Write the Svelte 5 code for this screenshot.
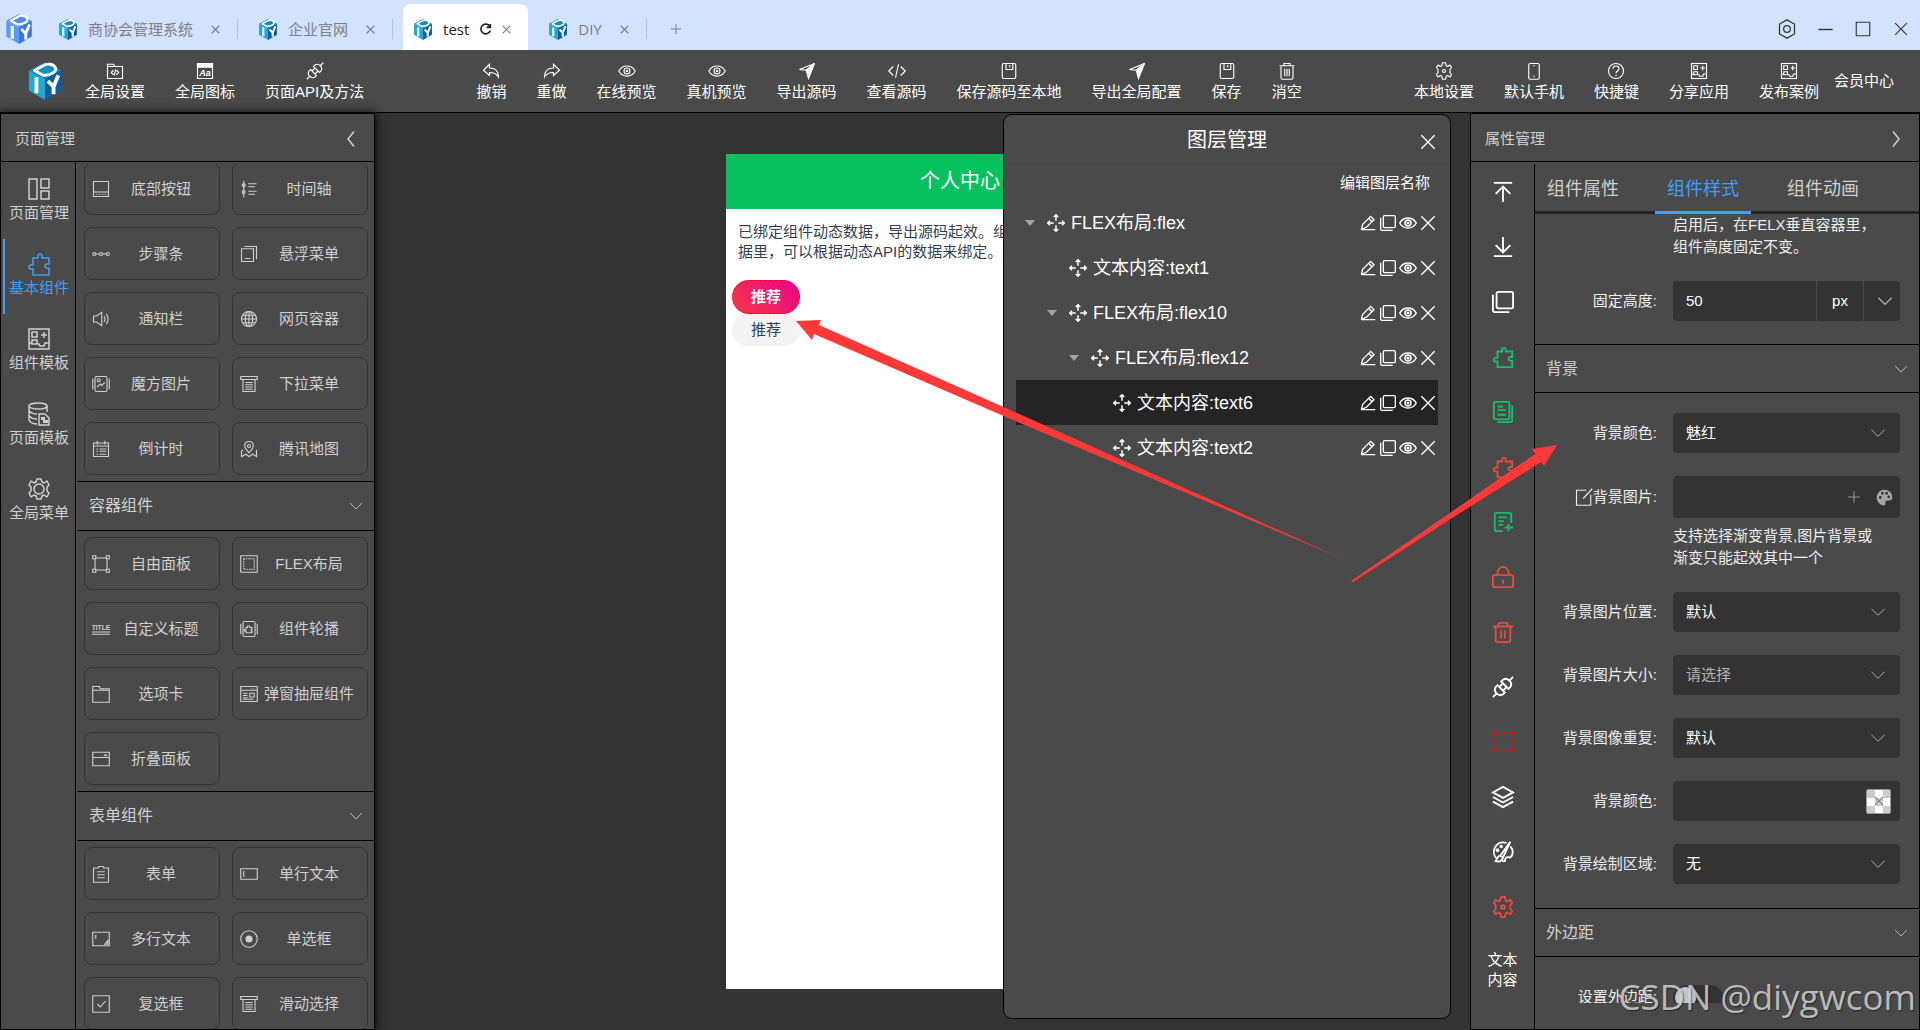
<script lang="ts">
    // Inner markup of every icon, drawn on a 24x24 grid
    const icons: Record<string, string> = {
        codeBox: '<path d="M2 3h8l2 3h10v16H2zM2 6h10M10 11l-3 3 3 3M14 11l3 3-3 3M13 10l-2 8"/>',
        fontBox: '<path d="M2 2h20v20H2z"/><path d="M2 2h20v5H2z" fill="currentColor"/><text x="12" y="19" font-size="12" font-weight="bold" font-style="italic" text-anchor="middle" fill="currentColor" stroke="none">Aa</text>',
        plug: '<path d="M23 1l-4 4M1 23l4-4M6 10l8 8-2 2c-3 2-5 1-7-1s-3-4-1-7zM10 6l8 8 2-2c2-3 1-5-1-7s-4-3-7-1zM8 12l4-4M12 16l4-4"/>',
        undo: '<path d="M10 3L2 11l8 7v-4c5 0 9 1 12 6 0-7-4-12-12-12z"/>',
        redo: '<path d="M14 3l8 8-8 7v-4c-5 0-9 1-12 6 0-7 4-12 12-12z"/>',
        eye: '<path d="M1 12c5-9 17-9 22 0-5 9-17 9-22 0z"/><circle cx="12" cy="12" r="4"/><circle cx="12" cy="12" r="1"/>',
        send: '<path d="M22 2L2 10l9 1z"/><path d="M22 2l-8 20-3-11z" fill="currentColor"/>',
        code: '<path d="M7 6l-6 6 6 6M17 6l6 6-6 6M14 3l-4 18"/>',
        save: '<rect x="3" y="2" width="18" height="20" rx="2"/><path d="M8 2v8h9V2M13 4v3"/>',
        trash: '<path d="M2 5h20M8 5V2h8v3M4 6v15q0 2 2 2h12q2 0 2-2V6M9 9v10M12 9v10M15 9v10"/>',
        bin: '<path d="M1 6h22M7 6V3q0-1 1-1h8q1 0 1 1v3M4 6v15q0 2 2 2h12q2 0 2-2V6M10 10v9M14 10v9"/>',
        cog: '<path d="M10 1h4l1 4 2 1 3-2 2 3-2 3v4l2 3-2 3-3-2-2 1-1 4h-4l-1-4-2-1-3 2-2-3 2-3v-4L2 7l2-3 3 2 2-1z" stroke-linejoin="round"/><circle cx="12" cy="12" r="2"/>',
        gear: '<path d="M10 2h4l1 3 2 1 3-2 2 4-2 2v4l2 2-2 4-3-2-2 1-1 3h-4l-1-3-2-1-3 2-2-4 2-2v-4L2 8l2-4 3 2 2-1z" stroke-linejoin="round"/><circle cx="12" cy="12" r="5"/>',
        phone: '<rect x="5" y="2" width="14" height="21" rx="2"/><path d="M11 5h2M11 19h2"/>',
        help: '<circle cx="12" cy="12" r="10"/><path d="M8 9c0-5 8-5 8 0 0 3-4 3-4 6M12 17v2"/>',
        template: '<rect x="2" y="2" width="20" height="20"/><path d="M5 5h5v5H5zM5 13h5v4H5zM17 5v6M14 8h6M2 16h3M10 17h2l1 2h4l1-3h4"/>',
        layout: '<path d="M2 2h8v20H2zM14 2h8v9h-8zM14 14h8v8h-8z"/>',
        puzzle: '<path d="M6 6h5V4a2 2 0 0 1 4 0v2h7v6h-2a2 2 0 0 0 0 4h2v7H6v-6H4a2 2 0 1 1 0-4h2z"/>',
        database: '<ellipse cx="11" cy="4" rx="9" ry="3"/><path d="M2 4v14q2 4 8 4M20 4v6M2 9q3 3 8 3M2 14q3 3 8 3M12 12h6l4 4v7H12z"/><path d="M14 15h4v3h3v3h-5v-3h-2z" fill="currentColor" stroke="none"/>',
        tabbar: '<path d="M2 2h20v20H2zM2 16h20"/><path d="M5 19h2M9 19h2M13 19h2M17 19h2"/>',
        timeline: '<path d="M5 1v22M11 5h11M11 9h9M11 15h11M11 19h9"/><circle cx="5" cy="7" r="2"/><circle cx="5" cy="16" r="2"/>',
        steps: '<circle cx="3" cy="12" r="2"/><circle cx="12" cy="12" r="2"/><circle cx="21" cy="12" r="2"/><path d="M5 12h5M14 12h5"/>',
        float: '<path d="M2 5h16v17H2zM6 2h16v17M6 18h8"/>',
        sound: '<path d="M2 8h4l7-5v18l-7-5H2zM16 8q3 4 0 8M19 5q5 7 0 14"/>',
        globe: '<circle cx="12" cy="12" r="10"/><ellipse cx="12" cy="12" rx="5" ry="10"/><path d="M2 12h20M12 2v20M4 7h16M4 17h16"/>',
        picture: '<rect x="4" y="2" width="16" height="20" rx="2"/><path d="M1 5v14M23 5v14M7 16l4-4 2 2 4-4"/><circle cx="9" cy="7" r="2"/>',
        dropdown: '<path d="M1 2h22v4H1zM4 6v16h16V6M7 10h10M7 13h10M7 16h10M7 19h10"/>',
        calendar: '<path d="M2 4h20v18H2zM2 8h20M7 1v5M17 1v5M6 12h2M10 12h9M6 15h2M10 15h9M6 19h2M10 19h9"/>',
        map: '<path d="M12 17c-9-9-6-15 0-15s9 6 0 15z"/><circle cx="12" cy="8" r="2"/><path d="M4 13l-2 2v7l6-3 4 3 5-3 5 3v-9"/>',
        free: '<path d="M4 5v14M20 5v14M5 4h14M5 20h14"/><path d="M1 1h4v4H1zM19 1h4v4h-4zM1 19h4v4H1zM19 19h4v4h-4z"/>',
        flexBox: '<path d="M1 1h22v22H1z"/><path d="M5 5h14v14H5z" stroke-dasharray="2 1"/>',
        title: '<text x="12" y="13" font-size="9" font-weight="bold" text-anchor="middle" fill="currentColor" stroke="none">TITLE</text><path d="M0 16h24M0 19h24"/>',
        carousel: '<rect x="4" y="2" width="16" height="20" rx="2"/><path d="M1 5v14M23 5v14M8 10h2V8h3v2h3v3h-1v2h1v2H8v-2H6v-2h2z"/>',
        tabs: '<path d="M1 2h9l1 3h12v18H1zM1 7h22M15 5v2"/>',
        drawer: '<path d="M1 2h22v20H1zM1 7h22M15 5h1M18 5h1M4 11h6M4 14h6M4 17h6M4 19h14M13 11h6v5h-6z"/>',
        collapse: '<path d="M1 3h22v18H1zM1 10h22M16 8l2-2 2 2"/>',
        form: '<path d="M2 4h6l1-2h6l1 2h6v19H2zM7 9h10M7 13h10M7 17h10"/>',
        input: '<path d="M1 5h22v14H1zM5 8v8"/>',
        textarea: '<path d="M1 3h22v18H1zM5 6v6M17 19l4-5v5z"/>',
        radio: '<circle cx="12" cy="12" r="11"/><circle cx="12" cy="12" r="4" fill="currentColor"/>',
        check: '<path d="M1 1h22v22H1zM7 12l4 4 7-8"/>',
        left: '<path d="M16 2L8 12l8 10"/>',
        right: '<path d="M8 2l8 10-8 10"/>',
        down: '<path d="M2 7l10 10L22 7"/>',
        close: '<path d="M2 2l20 20M22 2L2 22"/>',
        plus: '<path d="M12 2v20M2 12h20"/>',
        reload: '<path d="M20 6a9 9 0 1 0 1 8M21 2v6h-7"/>',
        hexagon: '<path d="M12 1l9 5v12l-9 5-9-5V6z"/><circle cx="12" cy="12" r="4"/>',
        minus: '<path d="M2 12h20"/>',
        square: '<path d="M3 3h18v18H3z"/>',
        move: '<path d="M12 1v8M12 15v8M1 12h8M15 12h8M9 4l3-3 3 3M9 20l3 3 3-3M4 9l-3 3 3 3M20 9l3 3-3 3"/>',
        pencil: '<path d="M2 22l2-8L16 2l5 5L10 18l-8 4h21M13 5l5 5"/>',
        copy: '<rect x="5" y="1" width="18" height="18" rx="2"/><path d="M1 4v17q0 2 2 2h16"/>',
        top: '<path d="M2 2h20M12 23V6M4 14l8-8 8 8"/>',
        bottom: '<path d="M2 22h20M12 1v17M4 10l8 8 8-8"/>',
        docs: '<rect x="2" y="1" width="17" height="19" rx="2"/><path d="M22 5v16q0 2-2 2H6M6 6h6M6 10h9M6 15h9"/>',
        docPlus: '<path d="M12 22H5q-2 0-2-2V4q0-2 2-2h14q2 0 2 2v9M7 7h9M7 11h6M7 15h5M18 14v8M14 18h9"/>',
        lock: '<rect x="1" y="10" width="22" height="13" rx="2"/><path d="M6 10V7a6 6 0 0 1 12 0v3M12 15v4"/>',
        dashed: '<path d="M2 6V2h4M10 2h4M18 2h4v4M22 10v4M22 18v4h-4M14 22h-4M6 22H2v-4M2 14v-4"/>',
        layers: '<path d="M12 1l11 6-11 6L1 7zM1 12l11 6 11-6M1 17l11 6 11-6"/>',
        brush: '<path d="M16 2C4-1-2 12 5 19M20 6c4 4 3 9 0 12-4-1-6 0-6 4h-3M20 1L9 16l3 2zM9 16c-3 0-3 3-5 6 4 1 7 0 8-4"/><circle cx="6" cy="10" r="1"/><circle cx="10" cy="6" r="1"/>',
        editBox: '<path d="M15 3H2v20h19V9M23 1L11 14"/>',
        palette: '<path d="M12 1C6 1 1 6 1 12s5 11 10 11c4 0 1-4 3-6s9 1 9-5c0-7-5-11-11-11zM6 14a2 2 0 1 1 0-4 2 2 0 0 1 0 4zM9 8a2 2 0 1 1 0-4 2 2 0 0 1 0 4zM15 8a2 2 0 1 1 0-4 2 2 0 0 1 0 4zM18 13a2 2 0 1 1 0-4 2 2 0 0 1 0 4z" fill="currentColor" stroke="none"/>',
    };

    let activeTab = $state('test');
    const tabs = ['商协会管理系统', '企业官网', 'test', 'DIY'];

    const leftTools = [['codeBox', '全局设置'], ['fontBox', '全局图标'], ['plug', '页面API及方法']];
    const midTools = [
        ['undo', '撤销'], ['redo', '重做'], ['eye', '在线预览'], ['eye', '真机预览'], ['send', '导出源码'],
        ['code', '查看源码'], ['save', '保存源码至本地'], ['send', '导出全局配置'], ['save', '保存'], ['trash', '消空'],
    ];
    const rightTools = [['cog', '本地设置'], ['phone', '默认手机'], ['help', '快捷键'], ['template', '分享应用'], ['template', '发布案例']];

    let activeNav = $state('基本组件');
    const navItems = [['layout', '页面管理'], ['puzzle', '基本组件'], ['template', '组件模板'], ['database', '页面模板'], ['gear', '全局菜单']];

    const baseWidgets = [
        ['tabbar', '底部按钮'], ['timeline', '时间轴'], ['steps', '步骤条'], ['float', '悬浮菜单'], ['sound', '通知栏'],
        ['globe', '网页容器'], ['picture', '魔方图片'], ['dropdown', '下拉菜单'], ['calendar', '倒计时'], ['map', '腾讯地图'],
    ];
    const boxWidgets = [
        ['free', '自由面板'], ['flexBox', 'FLEX布局'], ['title', '自定义标题'], ['carousel', '组件轮播'],
        ['tabs', '选项卡'], ['drawer', '弹窗抽屉组件'], ['collapse', '折叠面板'],
    ];
    const formWidgets = [
        ['form', '表单'], ['input', '单行文本'], ['textarea', '多行文本'],
        ['radio', '单选框'], ['check', '复选框'], ['dropdown', '滑动选择'],
    ];

    // Layer tree, flattened with its depth
    let selectedLayer = $state('文本内容:text6');
    const layers = [
        { name: 'FLEX布局:flex', depth: 0, open: true },
        { name: '文本内容:text1', depth: 1, open: false },
        { name: 'FLEX布局:flex10', depth: 1, open: true },
        { name: 'FLEX布局:flex12', depth: 2, open: true },
        { name: '文本内容:text6', depth: 3, open: false },
        { name: '文本内容:text2', depth: 3, open: false },
    ];

    const sideTools = [
        ['top', 'white'], ['bottom', 'white'], ['copy', 'white'], ['puzzle', 'green'], ['docs', 'green'], ['puzzle', 'red'], ['docPlus', 'green'],
        ['lock', 'red'], ['bin', 'red'], ['plug', 'white'], ['dashed', 'bright'], ['layers', 'white'], ['brush', 'white'], ['cog', 'red'],
    ];

    let activeProp = $state('组件样式');
    const propTabs = ['组件属性', '组件样式', '组件动画'];

    let fixedHeight = $state('50');
    let marginOn = $state(false);
</script>

{#snippet icon(name: string, size = 18, weight = 1.5)}
    <svg class="icon" width={size} height={size} viewBox="0 0 24 24" fill="none" stroke="currentColor" stroke-width={weight} aria-hidden="true">
        {@html icons[name]}
    </svg>
{/snippet}

{#snippet cube(width: number, height: number, light: boolean)}
    <svg class="icon" {width} {height} viewBox="0 0 36 40" aria-hidden="true">
        <path d="M18 0l17 9-17 9L1 9z" fill={light ? '#4d8df2' : '#0f8fc0'} />
        <path d="M1 9l17 9v22L1 30z" fill={light ? '#5a9cf8' : '#1fa9d6'} />
        <path d="M35 9l-17 9v22l17-10z" fill={light ? '#3a76e0' : '#0b5c9c'} />
        <path d="M7 9l9-5c5-3 11-2 13 2s-5 8-13 8z" fill="none" stroke="#fff" stroke-width="3" stroke-linejoin="round" />
        <path d="M9 16v17M21 20l6 6M32 14l-5 12v8" fill="none" stroke="#fff" stroke-width="4" />
    </svg>
{/snippet}

{#snippet tool(name: string, label: string)}
    <button class="tool">
        <span class="tool-icon">{@render icon(name)}</span>
        <span>{label}</span>
    </button>
{/snippet}

{#snippet widgets(list: string[][])}
    <div class="widgets">
        {#each list as [name, label]}
            <button class="widget">
                {@render icon(name)}
                <span>{label}</span>
            </button>
        {/each}
    </div>
{/snippet}

{#snippet sectionHead(label: string)}
    <button class="section-head">
        <span>{label}</span>
        {@render icon('down', 14)}
    </button>
{/snippet}

{#snippet selectRow(id: string, label: string, value: string, placeholder = false)}
    <div class="row">
        <label for={id}>{label}:</label>
        <div class="select">
            <select {id} class:placeholder>
                <option>{value}</option>
            </select>
            {@render icon('down', 16)}
        </div>
    </div>
{/snippet}

<div class="app">
    <header class="tabbar">
        <span class="brand">{@render cube(28, 30, true)}</span>
        {#each tabs as tab}
            <div class="tab" class:active={tab === activeTab}>
                <button class="tab-name" onclick={() => (activeTab = tab)}>
                    {@render cube(20, 21, false)}
                    <span>{tab}</span>
                    {#if tab === activeTab}
                        {@render icon('reload', 13, 3)}
                    {/if}
                </button>
                <button class="tab-close" aria-label="关闭">{@render icon('close', 9, 3)}</button>
            </div>
        {/each}
        <button class="win" aria-label="新建">{@render icon('plus', 12, 2)}</button>
        <div class="win-controls">
            <button class="win" aria-label="设置">{@render icon('hexagon', 20)}</button>
            <button class="win" aria-label="最小化">{@render icon('minus', 17, 2)}</button>
            <button class="win" aria-label="最大化">{@render icon('square', 18)}</button>
            <button class="win" aria-label="关闭">{@render icon('close', 14, 2)}</button>
        </div>
    </header>

    <nav class="toolbar">
        <div class="tool-group">
            <span class="logo">{@render cube(36, 38, false)}</span>
            {#each leftTools as [name, label]}
                {@render tool(name, label)}
            {/each}
        </div>
        <div class="tool-group">
            {#each midTools as [name, label]}
                {@render tool(name, label)}
            {/each}
        </div>
        <div class="tool-group">
            {#each rightTools as [name, label]}
                {@render tool(name, label)}
            {/each}
            <button class="member">会员中心</button>
        </div>
    </nav>

    <main>
        <aside class="panel left-panel">
            <div class="panel-head">
                <span>页面管理</span>
                <button aria-label="收起">{@render icon('left', 18, 2)}</button>
            </div>
            <div class="panel-body">
                <div class="side-nav">
                    {#each navItems as [name, label]}
                        <button class:active={label === activeNav} onclick={() => (activeNav = label)}>
                            {@render icon(name, 24)}
                            <span>{label}</span>
                        </button>
                    {/each}
                </div>
                <div class="library">
                    <div class="scrolled">{@render widgets(baseWidgets)}</div>
                    {@render sectionHead('容器组件')}
                    {@render widgets(boxWidgets)}
                    {@render sectionHead('表单组件')}
                    {@render widgets(formWidgets)}
                </div>
            </div>
        </aside>

        <section class="canvas">
            <div class="phone">
                <h1>个人中心</h1>
                <p>已绑定组件动态数据，导出源码起效。组<br />据里，可以根据动态API的数据来绑定。</p>
                <div class="chips">
                    <span class="chip picked">推荐</span>
                    <span class="chip">推荐</span>
                </div>
            </div>

            <div class="layer-panel">
                <div class="layer-title">
                    <h2>图层管理</h2>
                    <button aria-label="关闭">{@render icon('close', 16, 2)}</button>
                </div>
                <div class="layer-hint">编辑图层名称</div>
                <ul>
                    {#each layers as layer}
                        <li class:selected={layer.name === selectedLayer}>
                            {#each { length: layer.depth } as _}
                                <span class="indent"></span>
                            {/each}
                            <span class="caret" class:open={layer.open}></span>
                            <button class="layer-name" onclick={() => (selectedLayer = layer.name)}>
                                {@render icon('move', 18, 2)}
                                <span>{layer.name}</span>
                            </button>
                            <div class="layer-actions">
                                <button aria-label="编辑">{@render icon('pencil', 16, 2)}</button>
                                <button aria-label="复制">{@render icon('copy', 16, 2)}</button>
                                <button aria-label="显示">{@render icon('eye', 18, 2)}</button>
                                <button aria-label="删除">{@render icon('close', 16, 2)}</button>
                            </div>
                        </li>
                    {/each}
                </ul>
            </div>
        </section>

        <aside class="panel right-panel">
            <div class="panel-head">
                <span>属性管理</span>
                <button aria-label="收起">{@render icon('right', 18, 2)}</button>
            </div>
            <div class="panel-body">
                <div class="side-tools">
                    {#each sideTools as [name, tone]}
                        <button class={tone} aria-label={name}>{@render icon(name, 22, 2)}</button>
                    {/each}
                    <span>文本<br />内容</span>
                </div>
                <div class="props">
                    <div class="prop-tabs">
                        {#each propTabs as tab}
                            <button class:active={tab === activeProp} onclick={() => (activeProp = tab)}>{tab}</button>
                        {/each}
                    </div>
                    <div class="prop-scroll">
                        <div class="rows first">
                            <p class="tip">启用后，在FELX垂直容器里，组件高度固定不变。</p>
                            <div class="row">
                                <label for="height">固定高度:</label>
                                <div class="number">
                                    <input id="height" type="text" bind:value={fixedHeight} />
                                    <span class="unit">px</span>
                                    <button aria-label="单位">{@render icon('down', 16, 2)}</button>
                                </div>
                            </div>
                        </div>
                        {@render sectionHead('背景')}
                        <div class="rows">
                            {@render selectRow('bg-preset', '背景颜色', '魅红')}
                            <div>
                                <div class="row">
                                    <label for="bg-image">{@render icon('editBox', 18)}背景图片:</label>
                                    <div class="field tall">
                                        <input id="bg-image" type="text" />
                                        <button aria-label="添加">{@render icon('plus', 14)}</button>
                                        <button aria-label="调色">{@render icon('palette', 17)}</button>
                                    </div>
                                </div>
                                <p class="tip under">支持选择渐变背景,图片背景或渐变只能起效其中一个</p>
                            </div>
                            {@render selectRow('bg-position', '背景图片位置', '默认')}
                            {@render selectRow('bg-size', '背景图片大小', '请选择', true)}
                            {@render selectRow('bg-repeat', '背景图像重复', '默认')}
                            <div class="row">
                                <label for="bg-color">背景颜色:</label>
                                <div class="field">
                                    <input id="bg-color" type="text" />
                                    <button class="swatch" aria-label="选择颜色">{@render icon('close', 10, 3)}</button>
                                </div>
                            </div>
                            {@render selectRow('bg-clip', '背景绘制区域', '无')}
                        </div>
                        {@render sectionHead('外边距')}
                        <div class="rows">
                            <div class="row">
                                <label for="margin">设置外边距:</label>
                                <input id="margin" class="switch" type="checkbox" bind:checked={marginOn} />
                            </div>
                        </div>
                    </div>
                </div>
            </div>
        </aside>
    </main>

    <!-- Pointer arrows laid over the whole editor -->
    <svg class="arrows" width="1920" height="1030" viewBox="0 0 1920 1030" aria-hidden="true">
        <path d="M796 321l25-1-2 5 180 80 344 154-344-145-185-80-2 6z" />
        <path d="M1557 445l-13 21-3-4-81 51-107 69-2-1 109-75 75-52-3-5z" />
    </svg>
    <div class="watermark">CSDN @diygwcom</div>
</div>

<style>
    :global(body) {
        font-family: "Liberation Sans", "Noto Sans CJK SC", sans-serif;
        font-size: 15px;
        line-height: 20px;
        color: #d0d0d0;
        background: #333;
    }
    button {
        display: flex;
        align-items: center;
        justify-content: center;
        margin: 0;
        padding: 0;
        border: 0;
        background: none;
        color: inherit;
        font: inherit;
        cursor: pointer;
    }
    h1, h2, p, ul {
        margin: 0;
        padding: 0;
        font-weight: normal;
        list-style: none;
    }
    .icon {
        display: block;
        flex: none;
        overflow: visible;
    }
    .app {
        position: relative;
        display: flex;
        flex-direction: column;
        height: 100vh;
        overflow: hidden;
    }

    /* window tabs */
    .tabbar {
        display: flex;
        align-items: flex-end;
        flex: none;
        height: 50px;
        background: #d3e2fd;
        color: #7b808a;
        font-family: "Open Sans", "Noto Sans CJK SC", sans-serif;
    }
    .brand {
        width: 43px;
        padding: 0 0 6px 5px;
    }
    .tab {
        display: flex;
        align-items: center;
        height: 42px;
        margin-right: 10px;
        padding: 4px 0 0 10px;
    }
    .tab:not(.active)::after {
        content: "";
        width: 1px;
        height: 20px;
        margin-left: 17px;
        background: #b4c3dd;
    }
    .tab-name {
        gap: 10px;
    }
    .tab-close {
        margin-left: 18px;
    }
    .tab.active {
        padding-right: 17px;
        border-radius: 8px 8px 0 0;
        background: #fff;
        color: #222;
    }
    .tab.active .tab-close {
        margin-left: 10px;
        color: #888;
    }
    .win {
        width: 38px;
        height: 42px;
    }
    .win-controls {
        display: flex;
        margin-left: auto;
        color: #333;
    }

    /* toolbar */
    .toolbar {
        display: flex;
        justify-content: space-between;
        flex: none;
        height: 62px;
        padding: 0 11px 0 27px;
        border-bottom: 1px solid #000;
        background: #4a4a4a;
        color: #fff;
    }
    .tool-group {
        display: flex;
        align-items: center;
        white-space: nowrap;
    }
    .logo {
        width: 43px;
    }
    .tool {
        flex-direction: column;
        padding: 2px 15px 0;
    }
    .tool-icon {
        display: flex;
        height: 20px;
    }
    .member {
        padding-right: 15px;
    }

    /* panels */
    main {
        display: flex;
        flex: 1;
        min-height: 0;
    }
    .panel {
        display: flex;
        flex-direction: column;
        flex: none;
        box-sizing: border-box;
        border: 1px solid #000;
        background: #4a4a4a;
    }
    .left-panel {
        z-index: 1;
        width: 375px;
        box-shadow: 0 0 10px #000;
    }
    .right-panel {
        width: 450px;
    }
    .panel-head {
        display: flex;
        align-items: center;
        justify-content: space-between;
        height: 45px;
        padding: 2px 14px 0;
        border-bottom: 1px solid #000;
    }
    .panel-body {
        display: flex;
        flex: 1;
        min-height: 0;
    }
    .side-nav {
        flex: none;
        width: 72px;
        padding: 2px 0 0 2px;
        border-right: 1px solid #000;
    }
    .side-nav button {
        flex-direction: column;
        gap: 2px;
        width: 72px;
        height: 75px;
        padding: 0 2px 4px 0;
        border-left: 2px solid transparent;
        box-sizing: border-box;
    }
    .side-nav .active {
        border-color: #409eff;
        color: #409eff;
    }
    .library {
        flex: 1;
        min-width: 0;
        margin: 2px 0 0 2px;
        overflow: hidden;
    }
    .scrolled {
        margin-top: -8px;
    }
    .widgets {
        display: grid;
        grid-template-columns: 1fr 1fr;
        gap: 12px;
        padding: 6px;
    }
    .widget {
        box-sizing: border-box;
        height: 53px;
        padding: 0 7px;
        border: 1px solid #333;
        border-radius: 8px;
        white-space: nowrap;
    }
    .widget span {
        flex: 1;
    }
    .section-head {
        box-sizing: border-box;
        justify-content: space-between;
        width: 100%;
        height: 49px;
        padding: 0 11px;
        border: solid #000;
        border-width: 1px 0;
        font-size: 16px;
    }
    .library .section-head {
        height: 50px;
    }

    /* canvas */
    .canvas {
        position: relative;
        display: flex;
        justify-content: center;
        flex: 1;
        min-width: 0;
        padding: 41px 0 41px 75px;
        background: #333;
    }
    .phone {
        width: 468px;
        background: #fff;
        color: #333f50;
    }
    .phone h1 {
        background: #07c160;
        color: #fff;
        font-size: 20px;
        line-height: 55px;
        text-align: center;
    }
    .phone p {
        padding: 13px 12px 18px;
        white-space: nowrap;
    }
    .chips {
        display: flex;
        flex-direction: column;
        align-items: flex-start;
        padding-left: 6px;
    }
    .chip {
        padding: 6px 19px;
        border-radius: 16px;
        background: #f3f3f3;
    }
    .chip.picked {
        padding: 6px 18px;
        border: 1px dashed #f00;
        border-radius: 17px;
        background: linear-gradient(45deg, #f43b47, #ec008c) border-box;
        color: #fff;
        font-weight: bold;
    }

    /* floating layer window */
    .layer-panel {
        position: absolute;
        top: 1px;
        right: 19px;
        bottom: 11px;
        box-sizing: border-box;
        width: 448px;
        border: 1px solid #000;
        border-radius: 9px;
        background: #4a4a4a;
        color: #fff;
    }
    .layer-title {
        display: grid;
        grid-template-columns: 44px 1fr 44px;
        align-items: center;
        height: 49px;
        border-bottom: 1px solid #464646;
    }
    .layer-title h2 {
        grid-column: 2;
        font-size: 20px;
        text-align: center;
    }
    .layer-title button {
        padding-top: 4px;
    }
    .layer-hint {
        padding: 8px 20px 7px;
        text-align: right;
    }
    .layer-panel ul {
        padding: 0 12px;
    }
    .layer-panel li {
        display: flex;
        align-items: center;
        height: 45px;
        padding: 0 0 0 9px;
        font-size: 18px;
    }
    .layer-panel .selected {
        background: #242424;
    }
    .indent {
        width: 22px;
    }
    .caret {
        width: 10px;
        margin-right: 12px;
    }
    .caret.open {
        box-sizing: border-box;
        height: 4px;
        border: 5px solid transparent;
        border-top: 6px solid #a0a3aa;
        border-bottom: 0;
    }
    .layer-name {
        gap: 6px;
    }
    .layer-actions {
        display: flex;
        margin-left: auto;
    }
    .layer-actions button {
        width: 20px;
    }

    /* properties */
    .side-tools {
        flex: none;
        width: 63px;
        margin-top: 2px;
        border-right: 1px solid #000;
        color: #fff;
        text-align: center;
    }
    .side-tools button {
        width: 100%;
        height: 55px;
    }
    .side-tools span {
        display: block;
        padding-top: 16px;
    }
    .green {
        color: #19be6b;
    }
    .red {
        color: #e54d42;
    }
    .bright {
        color: #f00;
    }
    .props {
        display: flex;
        flex-direction: column;
        flex: 1;
        min-width: 0;
    }
    .prop-tabs {
        display: flex;
        gap: 24px;
        height: 49px;
        border-bottom: 3px solid #242424;
    }
    .prop-tabs button {
        height: 52px;
        padding: 4px 12px 0;
        border-bottom: 3px solid transparent;
        box-sizing: border-box;
        font-size: 18px;
    }
    .prop-tabs .active {
        border-color: #409eff;
        color: #409eff;
    }
    .prop-scroll {
        flex: 1;
        margin-bottom: 26px;
        overflow: hidden;
    }
    .rows {
        display: flex;
        flex-direction: column;
        gap: 23px;
        padding: 20px 19px 24px 0;
        color: #eee;
    }
    .rows.first {
        padding-top: 0;
        padding-bottom: 23px;
    }
    .row {
        display: grid;
        grid-template-columns: 122px 1fr;
        gap: 16px;
        align-items: center;
        min-height: 40px;
    }
    .row label {
        display: flex;
        align-items: center;
        justify-content: flex-end;
    }
    .tip {
        margin-left: 138px;
        padding-right: 20px;
        line-height: 22px;
    }
    .tip.under {
        margin-top: 7px;
    }
    .select {
        display: grid;
        align-items: center;
    }
    .select select,
    .select :global(.icon) {
        grid-area: 1 / 1;
    }
    .select :global(.icon) {
        justify-self: end;
        margin-right: 14px;
        color: #aaa;
        pointer-events: none;
    }
    select,
    .field,
    .number {
        box-sizing: border-box;
        height: 40px;
        border: 0;
        border-radius: 4px;
        background: #333;
        color: #fff;
        font: inherit;
    }
    select {
        padding: 0 13px;
        appearance: none;
    }
    select.placeholder {
        color: #b4b4b4;
    }
    .field,
    .number {
        display: flex;
        align-items: center;
        min-width: 0;
    }
    .field {
        padding-right: 9px;
        color: #a3a6ad;
    }
    .field.tall {
        height: 42px;
        padding-right: 1px;
    }
    .field button {
        width: 30px;
    }
    .field input,
    .number input {
        flex: 1;
        min-width: 0;
        padding: 0 13px;
        border: 0;
        outline: 0;
        background: none;
        color: #fff;
        font: inherit;
    }
    .unit,
    .number button {
        height: 40px;
        border-left: 1px solid #4a4a4a;
        line-height: 40px;
    }
    .unit {
        width: 46px;
        text-align: center;
    }
    .number button {
        width: 37px;
        padding-left: 6px;
        color: #aaa;
    }
    .field .swatch {
        width: 25px;
        height: 25px;
        border: 1px solid #999;
        border-radius: 2px;
        background: repeating-conic-gradient(#fff 0 25%, #ccc 0 50%) 0 0 / 16px 16px;
        color: #888;
    }
    .switch {
        width: 50px;
        height: 25px;
        margin: 0;
        border-radius: 13px;
        background: #333;
        appearance: none;
    }
    .switch::before {
        content: "";
        display: block;
        width: 21px;
        height: 21px;
        margin: 2px;
        border-radius: 50%;
        background: #c0c4cc;
    }
    .switch:checked::before {
        margin-left: 27px;
    }

    .arrows {
        position: absolute;
        top: 0;
        left: 0;
        z-index: 2;
        fill: #ff3838;
        pointer-events: none;
    }
    .watermark {
        position: absolute;
        right: 4px;
        bottom: 10px;
        z-index: 3;
        color: rgba(225, 225, 225, 0.8);
        font-family: "Open Sans", sans-serif;
        font-size: 35px;
        line-height: 46px;
        text-shadow: 1px 1px 1px rgba(0, 0, 0, 0.5);
        pointer-events: none;
    }
</style>
